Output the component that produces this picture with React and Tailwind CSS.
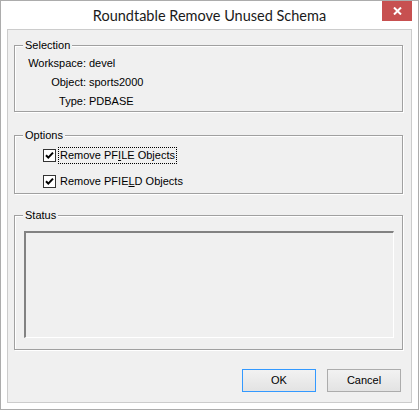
import React from "react";

const ui = { fontFamily: '"Liberation Sans", Arial, sans-serif' };

function Group({ label, className, children }) {
  return (
    <div
      className={`relative mx-[6px] w-[389px] border border-[#a0a0a0] shadow-[inset_1px_1px_0_#ffffff,1px_1px_0_#ffffff] ${className}`}
    >
      <span className="absolute -top-[8px] left-[8px] bg-[#f0f0f0] px-[2px] leading-[14px]">
        {label}
      </span>
      {children}
    </div>
  );
}

function Check({ children, focused }) {
  return (
    <div className="flex items-center h-[18px] pl-[28px]">
      <svg width="13" height="13" viewBox="0 0 13 13" className="shrink-0">
        <rect x="0.5" y="0.5" width="12" height="12" fill="#fff" stroke="#333" />
        <path d="M3 6.2 L5.3 8.6 L10 3.6" fill="none" stroke="#000" strokeWidth="2" />
      </svg>
      <span
        className={`ml-[2px] px-[1px] leading-[15px] border border-dotted ${focused ? "border-black" : "border-transparent"}`}
      >
        {children}
      </span>
    </div>
  );
}

function Btn({ children, primary }) {
  return (
    <button
      className={`w-[74px] h-[23px] border bg-gradient-to-b from-[#f2f2f2] to-[#e3e3e3] text-black ${primary ? "border-[#3399ff]" : "border-[#acacac]"}`}
    >
      {children}
    </button>
  );
}

export default function App() {
  return (
    <div className="w-[419px] h-[410px] border border-[#acacac] bg-white flex flex-col">
      <div className="relative h-[28px] flex items-center justify-center">
        <span
          className="text-[14.5px] text-[#1a1a1a] pt-[1px]"
          style={{ fontFamily: 'Lato, "Noto Sans", sans-serif' }}
        >
          Roundtable Remove Unused Schema
        </span>
        <button className="absolute right-[6px] top-0 w-[30px] h-[20px] bg-[#c75050] flex items-center justify-center">
          <svg width="9" height="8" viewBox="0 0 9 8">
            <path d="M1 0.5 L8 7.5 M8 0.5 L1 7.5" stroke="#fff" strokeWidth="2" />
          </svg>
        </button>
      </div>

      <div
        className="mx-[6px] mb-[6px] flex-1 border border-[#cccccc] bg-[#f0f0f0] text-[11px] text-black flex flex-col pt-[15px]"
        style={ui}
      >
        <Group label="Selection" className="h-[67px] pt-[8px]">
          {[
            ["Workspace:", "devel"],
            ["Object:", "sports2000"],
            ["Type:", "PDBASE"],
          ].map(([k, v]) => (
            <div key={k} className="flex h-[19px] items-center">
              <span className="w-[71px] text-right">{k}</span>
              <span className="ml-[3px]">{v}</span>
            </div>
          ))}
        </Group>

        <Group label="Options" className="mt-[23px] h-[59px] pt-[10px]">
          <Check focused>
            Remove PF<u>I</u>LE Objects
          </Check>
          <div className="h-[8px]" />
          <Check>
            Remove PFIE<u>L</u>D Objects
          </Check>
        </Group>

        <Group label="Status" className="mt-[21px] h-[135px] pt-[15px] pl-[9px]">
          <div className="w-[370px] h-[107px] border-t-2 border-l-2 border-r border-b border-t-[#828282] border-l-[#828282] border-r-white border-b-white" />
        </Group>

        <div className="mt-[19px] flex justify-end gap-[11px] pr-[10px]">
          <Btn primary>OK</Btn>
          <Btn>Cancel</Btn>
        </div>
      </div>
    </div>
  );
}
